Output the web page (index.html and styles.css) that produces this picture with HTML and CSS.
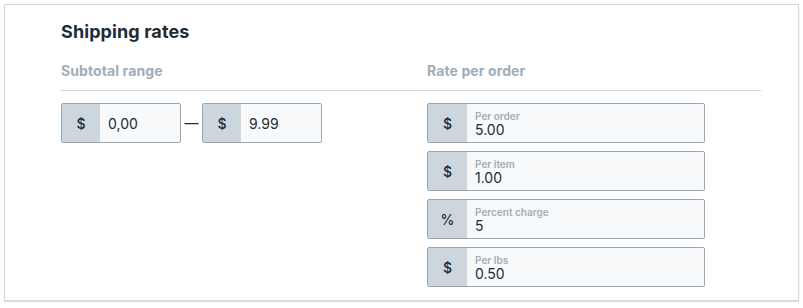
FILE: index.html
```html
<!doctype html>
<html lang="en">
<head>
  <meta charset="utf-8" />
  <title>Shipping rates</title>
  <link rel="stylesheet" href="styles.css">
</head>
<body>
  <div class="card">
    <h2>Shipping rates</h2>

    <div class="cols heads">
      <div class="col-left">Subtotal range</div>
      <div class="col-right">Rate per order</div>
    </div>

    <div class="cols">
      <div class="col-left range">
        <div class="field small">
          <span class="prefix">$</span>
          <span class="value">0,00</span>
        </div>
        <span class="dash">—</span>
        <div class="field small">
          <span class="prefix">$</span>
          <span class="value">9.99</span>
        </div>
      </div>

      <div class="col-right rates">
        <div class="field wide">
          <span class="prefix">$</span>
          <div class="value"><small>Per order</small>5.00</div>
        </div>
        <div class="field wide">
          <span class="prefix">$</span>
          <div class="value"><small>Per item</small>1.00</div>
        </div>
        <div class="field wide">
          <span class="prefix">%</span>
          <div class="value"><small>Percent charge</small>5</div>
        </div>
        <div class="field wide">
          <span class="prefix">$</span>
          <div class="value"><small>Per lbs</small>0.50</div>
        </div>
      </div>
    </div>
  </div>
</body>
</html>
```

FILE: styles.css
```css
:root {
  --ink: #212b36;
  --muted: #9fadb8;
  --line: #c9d3db;
  --field-border: #97a8b6;
  --prefix-bg: #ced6dd;
  --field-bg: #f8f9fa;
  font-family: Inter, "Noto Sans", sans-serif;
}
html, body { margin:0; padding:0; background:#fff; }
body { padding:4px; }

.card {
  height:297px; box-sizing:border-box;
  border:1px solid #d6d6d6; box-shadow:0 1px 1px #e2e2e2;
  padding:16px 37px 0 56px; background:#fff;
}
h2 {
  margin:0 0 20px; font-size:18px; font-weight:700;
  color:var(--ink); letter-spacing:0.1px;
}
.cols { display:flex; }
.col-left { width:366px; }
.col-right { flex:1; }
.heads {
  font-size:14px; font-weight:700; color:var(--muted); letter-spacing:0.1px;
  padding-bottom:11px; border-bottom:1px solid var(--line);
  margin-bottom:12px;
}
.range { display:flex; align-items:flex-start; }
.dash { width:21px; height:40px; line-height:40px; text-align:center; color:var(--ink); font-size:14px; }
.rates { display:flex; flex-direction:column; gap:8px; }

.field {
  display:flex; height:40px; box-sizing:border-box;
  border:1px solid var(--field-border); border-radius:2px;
  background:var(--field-bg);
}
.field.small { width:120px; }
.field.wide { width:278px; }
.prefix {
  width:39px; background:var(--prefix-bg);
  display:flex; align-items:center; justify-content:center;
  font-size:14px; font-weight:500; color:var(--ink);
}
.field.small .prefix { width:38px; }
.value {
  display:flex; align-items:center; padding-left:8px;
  font-size:14px; color:var(--ink);
}
.wide .value {
  flex-direction:column; align-items:flex-start; justify-content:center;
  line-height:15px; padding-top:1px;
}
.wide .value small {
  font-size:10px; font-weight:600; color:var(--muted); line-height:12px;
}
```
